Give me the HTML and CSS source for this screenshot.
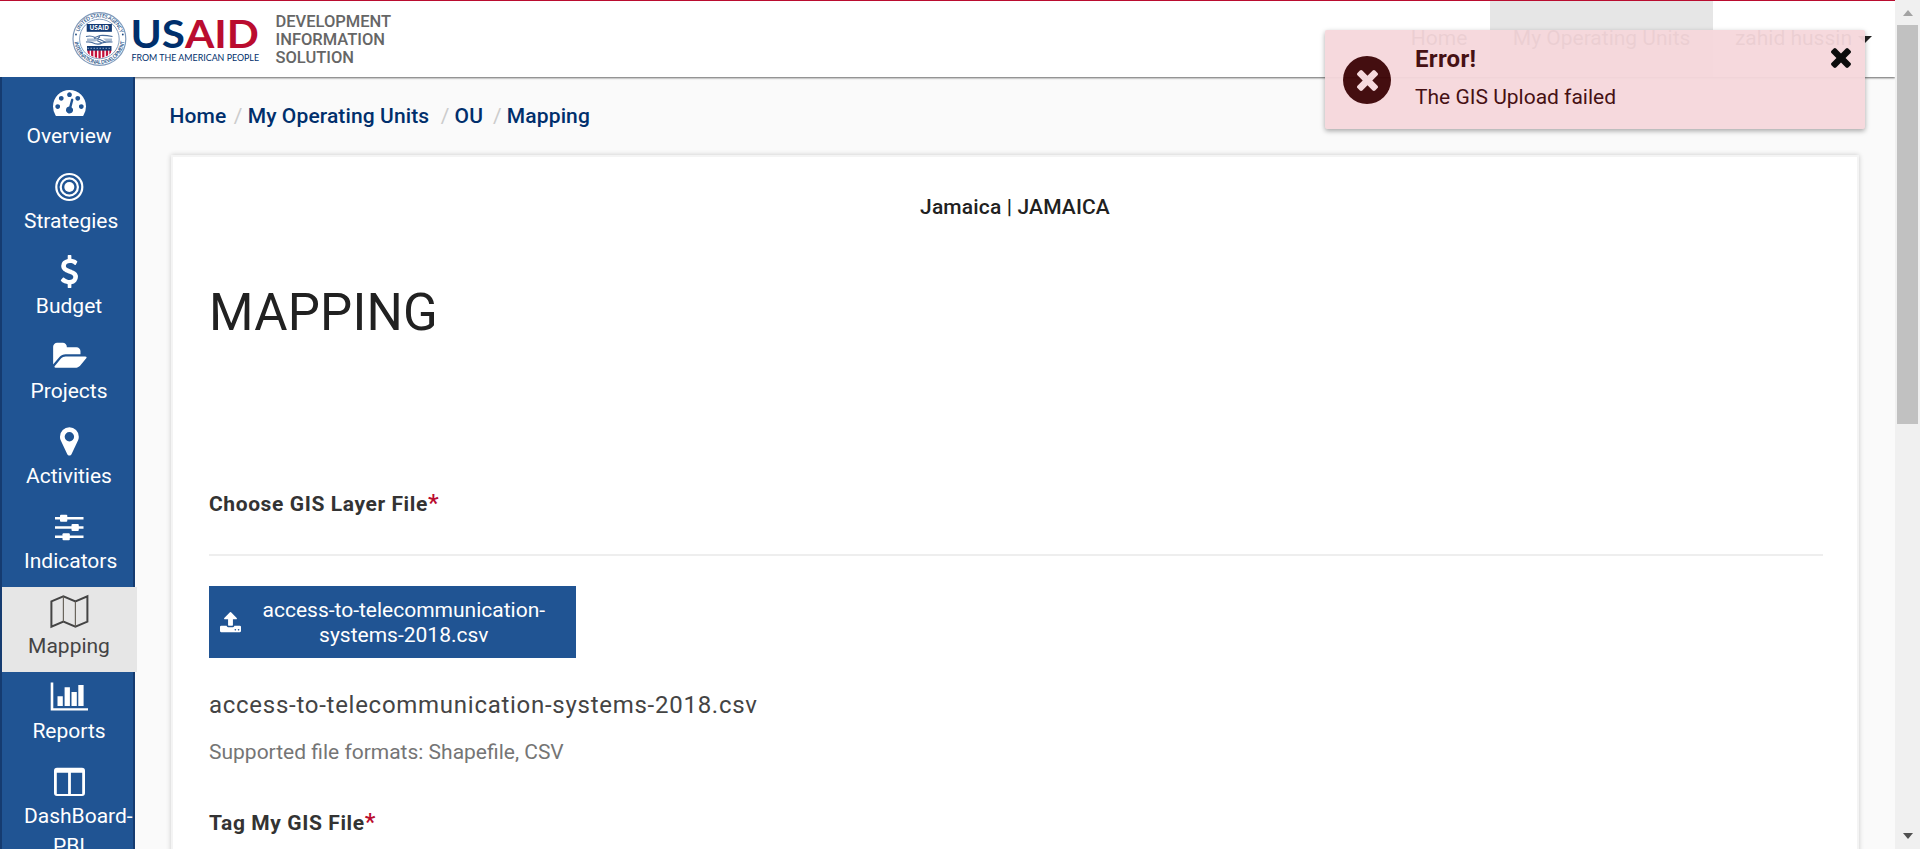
FILE: index.html
```
<!DOCTYPE html>
<html lang="en">
<head>
<meta charset="utf-8">
<title>Development Information Solution - Mapping</title>
<link rel="stylesheet" href="styles.css">
</head>
<body>
<div class="app">
  <header class="header">
    <svg class="brand" width="190" height="60" viewBox="70 9 190 60">
      <defs>
        <path id="arc-top" d="M77.9 39 A21.5 21.5 0 1 1 120.9 39"/>
        <path id="arc-bottom" d="M74.3 39 A25.1 25.1 0 0 0 124.5 39"/>
        <clipPath id="shield"><path d="M87 46h24.5v4.5q0 5.500-12.200 8q-12.300-2.500-12.300-8z"/></clipPath>
      </defs>
      <circle cx="99.400" cy="39" r="26.400" fill="#fff" stroke="#7f99ba" stroke-width="1.200"/>
      <circle cx="99.400" cy="39" r="19.800" fill="none" stroke="#86a0c0" stroke-width="1"/>
      <text class="seal-text"><textPath href="#arc-top" startOffset="7" textLength="54">UNITED STATES AGENCY</textPath></text>
      <text class="seal-text"><textPath href="#arc-bottom" startOffset="3" textLength="73">INTERNATIONAL DEVELOPMENT</textPath></text>
      <circle cx="76" cy="34.500" r=".9" fill="#1d4a80"/><circle cx="122.800" cy="34.500" r=".9" fill="#1d4a80"/>
      <rect x="86.700" y="24" width="25.200" height="7.800" fill="#123a73"/>
      <text class="seal-name" x="89.500" y="30.300" textLength="19.500" lengthAdjust="spacingAndGlyphs">USAID</text>
      <path d="M86 36.500q5-1.500 9 1l5-2q5-.5 12.500 1M86 42q4-.5 6 .5 6 3 10 .5 4-1.500 10.500-1M94 38.500l6 1 6 3M97 40.500l5 2.500M100 36.500l-3 3" fill="none" stroke="#476b9b" stroke-width="1.100"/>
      <path d="M87 38.500h7l4 2-3 1h-8zM103 38.500h9v2.500h-6z" fill="#a9bbd1"/>
      <g clip-path="url(#shield)">
        <rect x="86" y="46" width="27" height="13" fill="#fff"/>
        <path d="M88.500 50v10M92.200 50v10M95.900 50v10M99.600 50v10M103.300 50v10M107 50v10M110.500 50v10" stroke="#c2113a" stroke-width="2.300"/>
        <rect x="86" y="46" width="27" height="4.600" fill="#123a73"/>
        <path d="M87.500 48.300h24" stroke="#93a9c6" stroke-width="1" stroke-dasharray="1.500 1.500"/>
      </g>
      <text class="word" x="130.500" y="48.400" textLength="54.500" lengthAdjust="spacingAndGlyphs" fill="#002f6c">US</text>
      <text class="word" x="185" y="48.400" textLength="74" lengthAdjust="spacingAndGlyphs" fill="#ba0c2f">AID</text>
      <text class="tagline" x="131.500" y="61" textLength="127.500" lengthAdjust="spacingAndGlyphs">FROM THE AMERICAN PEOPLE</text>
    </svg>
    <div class="product">DEVELOPMENT<br>INFORMATION<br>SOLUTION</div>
    <nav class="topnav">
      <a class="tab">Home</a>
      <a class="tab tab-active">My Operating Units</a>
      <a class="tab tab-user">zahid hussin<span class="caret"></span></a>
    </nav>
  </header>
  <div class="body">
    <nav class="sidebar">
      <a class="item"><svg class="icon" viewBox="0 0 45 34"><g transform="translate(6 -1.700) scale(.01842)"><path d="M384 1152q0-53-37.500-90.500t-90.500-37.500-90.500 37.500-37.500 90.500 37.500 90.500 90.500 37.500 90.500-37.500 37.500-90.500zm192-448q0-53-37.500-90.500t-90.500-37.500-90.500 37.500-37.500 90.500 37.500 90.500 90.500 37.500 90.500-37.500 37.500-90.500zm428 481l101-382q6-26-7.500-48.500t-38.500-29.500-48 6.500-30 39.500l-101 382q-60 5-107 43.500t-63 98.500q-20 77 20 146t117 89 146-20 89-117q16-60-6-117t-72-91zm660-33q0-53-37.500-90.500t-90.500-37.500-90.500 37.500-37.500 90.500 37.500 90.500 90.500 37.500 90.500-37.500 37.500-90.500zm-640-640q0-53-37.500-90.500t-90.500-37.500-90.500 37.500-37.500 90.500 37.500 90.500 90.500 37.500 90.500-37.500 37.500-90.500zm448 192q0-53-37.500-90.500t-90.500-37.500-90.500 37.500-37.500 90.500 37.500 90.500 90.500 37.500 90.500-37.500 37.500-90.500zm320 448q0 261-141 483-19 29-54 29h-1402q-35 0-54-29-141-221-141-483 0-182 71-348t191-286 286-191 348-71 348 71 286 191 191 286 71 348z"/></g></svg><span class="label">Overview</span></a>
      <a class="item"><svg class="icon" viewBox="0 0 45 34"><g fill="none" stroke="#fff" stroke-width="2.200"><circle cx="22.300" cy="15" r="13"/><circle cx="22.300" cy="15" r="8.600"/></g><circle cx="22.300" cy="15" r="5"/></svg><span class="label">Strategies</span></a>
      <a class="item"><svg class="icon" viewBox="0 0 45 34"><g transform="translate(5.900 -2) scale(.0184)"><path d="M1362 1185q0 153-99.500 263.500t-258.500 136.500v175q0 14-9 23t-23 9h-135q-13 0-22.500-9.500t-9.500-22.500v-175q-66-9-127.500-31t-101.500-44.500-74-48-46.500-37.500-17.500-18q-17-21-2-41l103-135q7-10 23-12 15-2 24 9l2 2q113 99 243 125 37 8 74 8 81 0 142.500-43t61.500-122q0-28-15-53t-33.500-42-58.500-37.500-66-32-80-32.500q-39-16-61.500-25t-61.500-26.500-62.500-31-56.500-35.500-53.500-42.500-43.500-49-35.500-58-21-66.500-8.500-78q0-138 98-242t255-134v-180q0-13 9.500-22.500t22.500-9.500h135q14 0 23 9t9 23v176q57 6 110.500 23t87 33.500 63.500 37.500 39 29 15 14q17 18 5 38l-81 146q-8 15-23 16-14 3-27-7-3-3-14.500-12t-39-26.500-58.500-32-74.500-26-85.500-11.500q-95 0-155 43t-60 111q0 26 8.500 48t29.500 41.500 39.500 33 56 31 60.500 27 70 27.500q53 20 81 31.500t76 35 75.500 42.500 62 50 53 63.500 31.500 76.500 13 94z"/></g></svg><span class="label">Budget</span></a>
      <a class="item"><svg class="icon" viewBox="0 0 45 34"><g transform="translate(5 -1.500) scale(.0178)"><path d="M1943 952q0 31-31 66l-336 396q-43 51-120.500 86.500t-143.500 35.500h-1088q-34 0-60.500-13t-26.500-43q0-31 31-66l336-396q43-51 120.500-86.500t143.500-35.500h1088q34 0 60.500 13t26.500 43zm-343-344v160h-832q-94 0-197 47.500t-164 119.500l-337 396-5 6q0-4-.5-12.500t-.5-12.500v-960q0-92 66-158t158-66h320q92 0 158 66t66 158v32h544q92 0 158 66t66 158z"/></g></svg><span class="label">Projects</span></a>
      <a class="item"><svg class="icon" viewBox="0 0 45 34"><g transform="translate(5.900 -2) scale(.0184)"><path d="M1152 640q0-106-75-181t-181-75-181 75-75 181 75 181 181 75 181-75 75-181zm256 0q0 109-33 179l-364 774q-16 33-47.500 52t-67.500 19-67.500-19-46.500-52l-365-774q-33-70-33-179 0-212 150-362t362-150 362 150 150 362z"/></g></svg><span class="label">Activities</span></a>
      <a class="item"><svg class="icon" viewBox="0 0 45 34"><path d="M8 5h28.500v2.500H8zM8 14.300h28.500v2.500H8zM8 23.500h28.500V26H8z"/><rect x="13" y="2.800" width="7.300" height="7" rx="1"/><rect x="24.500" y="12.100" width="7.300" height="7" rx="1"/><rect x="15.500" y="21.300" width="7.300" height="7" rx="1"/></svg><span class="label">Indicators</span></a>
      <a class="item item-active"><svg class="icon" viewBox="0 0 45 34"><path d="M4.400 4.300l12-5 12 5 12-5v25.400l-12 5-12-5-12 5z" fill="none" stroke="#444" stroke-width="2"/><path d="M16.400 -.5v25M28.400 4.500v25" stroke="#6a655c" stroke-width="1.200"/></svg><span class="label">Mapping</span></a>
      <a class="item"><svg class="icon" viewBox="0 0 45 34"><path d="M3.700 .5h2.600v25.700H41V28.500H3.700zM10.500 14.300h5.300V24h-5.300zM17.600 5.300h5.300V24h-5.300zM24.500 10h5.300v14h-5.300zM31.300 3h5.300v21h-5.300z"/></svg><span class="label">Reports</span></a>
      <a class="item"><svg class="icon" viewBox="0 0 45 34"><path fill-rule="evenodd" d="M10 .7h25q3 0 3 3v22.300q0 3-3 3H10q-3 0-3-3V3.700q0-3 3-3zM9.800 5.700v21.300h11.300V5.700zM23.900 5.700v21.300h11.300V5.700z"/></svg><span class="label">DashBoard-PBI</span></a>
    </nav>
    <main class="main">
      <div class="crumbs"><a>Home</a><i>/</i><a>My Operating Units</a><i class="wide">/</i><a>OU</a><i class="mid">/</i><a>Mapping</a></div>
      <section class="card">
        <div class="unit">Jamaica | JAMAICA</div>
        <h1 class="title">MAPPING</h1>
        <div class="field">Choose GIS Layer File<span class="req">*</span></div>
        <hr class="rule">
        <button class="upload">
          <svg class="upload-icon" width="21" height="21" viewBox="64 64 1664 1664"><path d="M1344 1472q0-26-19-45t-45-19-45 19-19 45 19 45 45 19 45-19 19-45zm256 0q0-26-19-45t-45-19-45 19-19 45 19 45 45 19 45-19 19-45zm128-224v320q0 40-28 68t-68 28h-1472q-40 0-68-28t-28-68v-320q0-40 28-68t68-28h427q21 56 70.500 92t110.500 36h256q61 0 110.500-36t70.500-92h427q40 0 68 28t28 68zm-325-648q-17 40-59 40h-256v448q0 26-19 45t-45 19h-256q-26 0-45-19t-19-45v-448h-256q-42 0-59-40-17-39 14-69l448-448q18-19 45-19t45 19l448 448q31 30 14 69z"/></svg>
          <span class="upload-text">access-to-telecommunication-<br>systems-2018.csv</span>
        </button>
        <div class="filename">access-to-telecommunication-systems-2018.csv</div>
        <div class="hint">Supported file formats: Shapefile, CSV</div>
        <div class="field field-tag">Tag My GIS File<span class="req">*</span></div>
      </section>
    </main>
  </div>
</div>
<div class="scrollbar"><span class="arrow-up"></span><span class="thumb"></span><span class="arrow-down"></span></div>
<div class="toast">
  <div class="toast-icon"><svg width="21" height="21" viewBox="302 366 1188 1188"><path id="times" d="M1490 1322q0 40-28 68l-136 136q-28 28-68 28t-68-28l-294-294-294 294q-28 28-68 28t-68-28l-136-136q-28-28-28-68t28-68l294-294-294-294q-28-28-28-68t28-68l136-136q28-28 68-28t68 28l294 294 294-294q28-28 68-28t68 28l136 136q28 28 28 68t-28 68l-294 294 294 294q28 28 28 68z"/></svg></div>
  <div class="toast-copy"><div class="toast-title">Error!</div><div class="toast-msg">The GIS Upload failed</div></div>
  <svg class="toast-close" width="20" height="20" viewBox="302 366 1188 1188"><use href="#times"/></svg>
</div>
</body>
</html>
```
FILE: styles.css
```
* { box-sizing: border-box; }
body { margin: 0; width: 1920px; height: 849px; overflow: hidden; display: flex; background: #fafafa; font: 21px/30px Roboto, "Liberation Sans", sans-serif; color: #212121; position: relative; }
.app { width: 1895px; height: 849px; overflow: hidden; display: flex; flex-direction: column; }
.header { height: 77px; flex: none; display: flex; background: #fff; border-top: 1px solid #ba0c2f; box-shadow: 0 1px 2px rgba(0,0,0,.6); padding-left: 70px; }
.brand { margin-top: 8px; flex: none; }
.seal-text { font: 600 5.4px "Open Sans", sans-serif; fill: #2c578b; }
.seal-name { font: 700 7px "Open Sans", sans-serif; fill: #fff; }
.word { font: 700 38px Lato, "Open Sans", sans-serif; }
.tagline { font: 400 9.8px Lato, "Open Sans", sans-serif; fill: #002f6c; }
.product { margin: 12px 0 0 15.5px; font-weight: 500; font-size: 16.5px; line-height: 18px; color: #666; }
.topnav { margin-left: auto; display: flex; color: #212121; }
.tab { padding: 22px 22.5px 0 23px; white-space: nowrap; }
.tab-active { background: #e6e6e6; }
.tab-user { padding: 22px 23px 0 22px; display: flex; }
.caret { border: 7px solid transparent; border-top-color: #212121; border-bottom: 0; margin: 13px 0 0 6px; height: 0; }

.body { flex: 1; display: flex; min-height: 0; position: relative; }
.sidebar { width: 135px; flex: none; background: #205493; border: solid #153b70; border-width: 0 2px; }
.item { width: 135px; height: 85px; padding: 10px 23px 0 22px; display: flex; flex-direction: column; color: #fff; }
.icon { width: 45px; height: 34px; margin: -.5px 0 .5px 22.5px; fill: #fff; flex: none; overflow: visible; }
.label { display: block; line-height: 30px; text-align: center; flex: none; }
.item-active { background: #e6e6e6; color: #444; position: relative; }

.main { flex: 1; padding: 25px 36px 0; }
.crumbs { display: flex; height: 29px; margin-left: -1.5px; color: #002f6c; font-weight: 500; letter-spacing: .12px; line-height: 29px; }
.crumbs i { font-style: normal; font-weight: 400; color: #ccc; padding: 0 5px 0 7.5px; }
.crumbs .wide { padding-left: 11.5px; }
.crumbs .mid { padding-left: 10px; }
.card { width: 1688px; height: 750px; margin-top: 24px; background: #fff; border: 2px solid #f4f4f4; box-shadow: 0 0 5px rgba(0,0,0,.2); padding: 35px 34px 0 36px; }
.unit { text-align: center; font-weight: 500; letter-spacing: .15px; padding-right: 2px; }
.title { margin: 61px 0 0; font-weight: 400; font-size: 51px; line-height: 60px; letter-spacing: .2px; }
.field { margin-top: 146px; font-weight: 700; letter-spacing: .6px; color: #333; }
.req { color: #ba0c2f; font-weight: 500; font-size: 24px; line-height: 20px; }
.rule { border: 0; height: 2px; background: #eee; margin: 35px 0 30px; }
.upload { display: flex; align-items: center; width: 367px; height: 72px; padding: 0 31px 0 11px; border: 0; background: #205493; color: #fff; font: inherit; line-height: 25px; }
.upload-icon { fill: #fff; flex: none; }
.upload-text { flex: none; margin-left: 21.5px; padding-top: 2px; text-align: center; white-space: nowrap; }
.filename { margin-top: 32px; font-size: 24px; letter-spacing: .73px; color: #444; }
.hint { margin-top: 17px; color: #757575; }
.field-tag { margin-top: 41px; }

.scrollbar { width: 25px; height: 849px; background: #f0f0f0; display: flex; flex-direction: column; align-items: center; padding: 10px 0; }
.arrow-up { border: 5.5px solid transparent; border-bottom: 6px solid #a3a3a3; border-top: 0; }
.thumb { width: 21px; height: 399px; margin-top: 9px; background: #c1c1c1; }
.arrow-down { border: 5.5px solid transparent; border-top: 6px solid #505050; border-bottom: 0; margin-top: auto; }

.toast { position: absolute; left: 1325px; top: 30px; width: 540px; height: 99px; padding: 0 14px 0 18px; display: flex; background: #f6d8dc; opacity: .95; box-shadow: 0 2px 5px rgba(0,0,0,.35); border-radius: 2px; color: #3d0508; }
.toast-icon { width: 48px; height: 48px; margin-top: 26px; border-radius: 50%; background: #3b0204; display: flex; align-items: center; justify-content: center; }
.toast-icon svg { fill: #f6d8dc; }
.toast-copy { flex: 1; margin-left: 24px; padding-top: 14px; }
.toast-title { font-weight: 700; font-size: 24px; letter-spacing: .3px; }
.toast-msg { margin-top: 8px; }
.toast-close { margin-top: 18px; fill: #000; }
```
